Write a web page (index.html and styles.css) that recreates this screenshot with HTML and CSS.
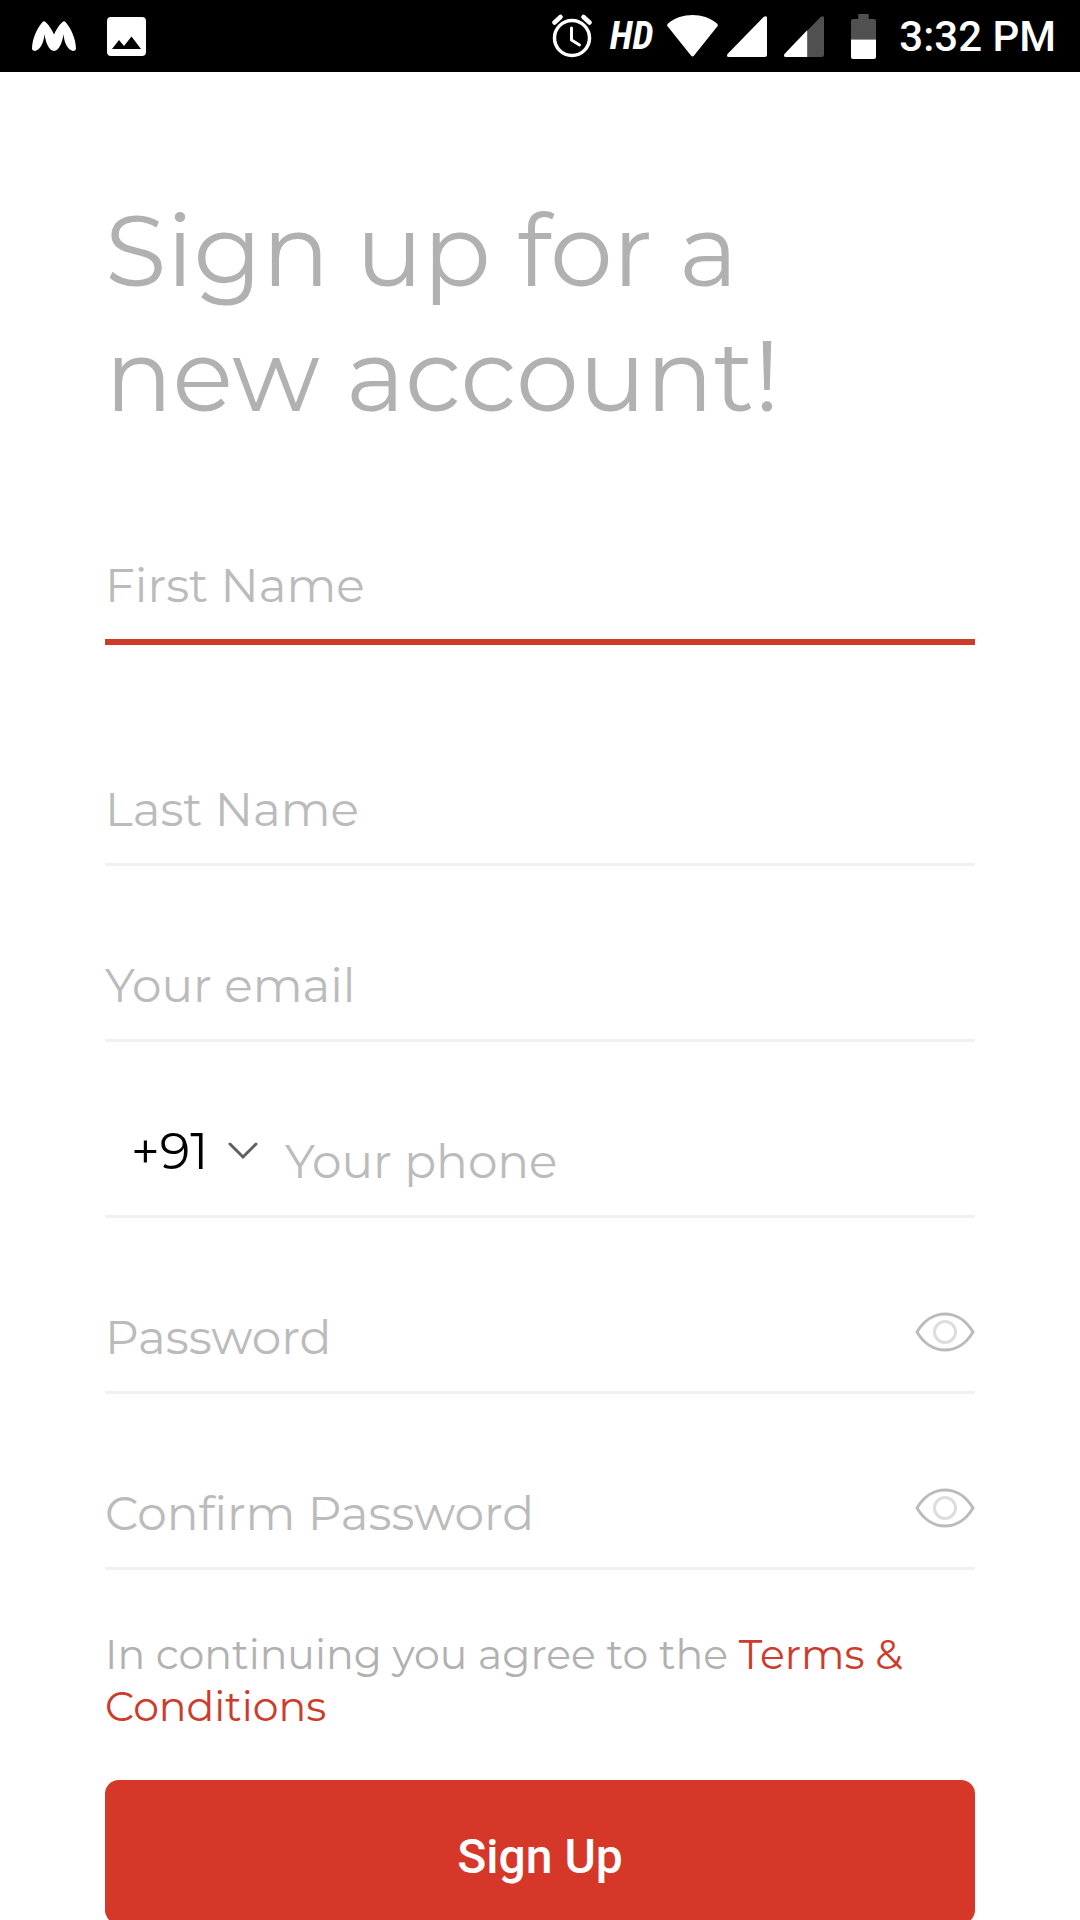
FILE: index.html
```html
<!DOCTYPE html>
<html lang="en">
<head>
<meta charset="utf-8">
<meta name="viewport" content="width=device-width, initial-scale=1">
<title>Sign up</title>
<link rel="stylesheet" href="styles.css">
</head>
<body>
<div class="screen">
  <header class="status-bar">
    <div class="status-group notifications">
      <svg class="icon-m" viewBox="0 0 44 30" aria-hidden="true"><path d="M0 28C0 17 6 6 10.500 1q1.500-1.500 3 0C17 4 20 9 22 13.500C24 9 27 4 30.500 1q1.500-1.500 3 0C38 6 44 17 44 28q-.5 2-3 2C36 29 32 22 31.500 13C30.500 21 27 30 22 30S13.500 21 12.500 13C12 22 8 29 3 30q-2.500 0-3-2z"/></svg>
      <svg class="icon-photo" viewBox="0 0 39 39" aria-hidden="true"><path fill-rule="evenodd" d="M4 0h31a4 4 0 0 1 4 4v31a4 4 0 0 1-4 4H4a4 4 0 0 1-4-4V4a4 4 0 0 1 4-4zm1 32h29L24.500 19.500 17 29l-5-6z"/></svg>
    </div>
    <div class="status-group system">
      <svg class="icon-alarm" viewBox="0 0 40 44" aria-hidden="true"><g fill="none" stroke="#fff" stroke-linecap="round"><circle cx="20" cy="24" r="17.500" stroke-width="3.500"/><path d="M19.500 14v12l8 5" stroke-width="3"/><path d="M2.500 8.500 8.500 3M37.500 8.500 31.500 3" stroke-width="4.500"/></g></svg>
      <span class="hd">HD</span>
      <svg class="icon-wifi" viewBox="0 0 49 42" preserveAspectRatio="none" aria-hidden="true"><path d="M1 8.500C14-2.800 35-2.800 48 8.500q1.500 1.500.3 3L26 40.500q-1.500 1.800-3 0L.7 11.500q-1.200-1.500.3-3z"/></svg>
      <svg class="icon-signal" viewBox="0 0 38 40" preserveAspectRatio="none" aria-hidden="true"><path d="M35 .8Q38-1 38 2v36q0 2-2 2H2q-3 0-1.500-3z"/></svg>
      <svg class="icon-signal weak" viewBox="0 0 38 40" preserveAspectRatio="none" aria-hidden="true"><path fill="#505050" d="M35 .8Q38-1 38 2v36q0 2-2 2H2q-3 0-1.500-3z"/><path d="M22 14v26H2q-3 0-1.500-3z"/></svg>
      <svg class="icon-battery" viewBox="0 0 24 44" preserveAspectRatio="none" aria-hidden="true"><path fill="#505050" d="M7 0h10v5h5q2 0 2 2v18H0V7q0-2 2-2h5z"/><path d="M0 25h24v17q0 2-2 2H2q-2 0-2-2z"/></svg>
      <time class="clock">3:32 PM</time>
    </div>
  </header>

  <main class="content">
    <h1 class="title">Sign up for a<br>new account!</h1>
    <form class="form">
      <div class="field first">
        <input class="input" type="text" placeholder="First Name" aria-label="First Name">
      </div>
      <div class="field">
        <input class="input" type="text" placeholder="Last Name" aria-label="Last Name">
      </div>
      <div class="field">
        <input class="input" type="email" placeholder="Your email" aria-label="Your email">
      </div>
      <div class="field">
        <div class="country">
          <select class="code" aria-label="Country code"><option>+91</option></select>
          <svg class="chevron" viewBox="0 0 30 18" aria-hidden="true"><path d="M2 2l13 13L28 2"/></svg>
        </div>
        <input class="input" type="tel" placeholder="Your phone" aria-label="Your phone">
      </div>
      <div class="field">
        <input class="input" type="password" placeholder="Password" aria-label="Password">
        <button class="reveal" type="button" aria-label="Show password">
          <svg class="eye" viewBox="0 0 60 40" aria-hidden="true"><path d="M2 20C16-4 44-4 58 20 44 44 16 44 2 20z"/><circle cx="30" cy="20" r="10.500"/></svg>
        </button>
      </div>
      <div class="field">
        <input class="input" type="password" placeholder="Confirm Password" aria-label="Confirm Password">
        <button class="reveal" type="button" aria-label="Show confirmed password">
          <svg class="eye" viewBox="0 0 60 40" aria-hidden="true"><path d="M2 20C16-4 44-4 58 20 44 44 16 44 2 20z"/><circle cx="30" cy="20" r="10.500"/></svg>
        </button>
      </div>
      <p class="terms">In continuing you agree to the <a class="terms-link" href="#">Terms &amp; Conditions</a></p>
      <button class="submit" type="submit">Sign Up</button>
    </form>
  </main>
</div>
</body>
</html>
```
FILE: styles.css
```css
* {
  box-sizing: border-box;
}

body {
  margin: 0;
  background: #fff;
  font-family: Montserrat, Inter, sans-serif;
  font-weight: 400;
}

.screen {
  height: 100vh;
  overflow-y: auto;
  scrollbar-width: none;
}

.status-bar {
  display: flex;
  justify-content: space-between;
  align-items: center;
  height: 72px;
  padding: 0 24px 0 32px;
  background: #000;
  color: #fff;
  font-family: Roboto, sans-serif;
}

.status-group {
  display: flex;
  align-items: center;
}

.status-group svg {
  display: block;
  fill: #fff;
}

.notifications {
  gap: 31px;
}

.icon-m {
  width: 44px;
  height: 30px;
}

.icon-photo {
  width: 39px;
  height: 39px;
}

.icon-alarm {
  width: 40px;
  height: 44px;
}

.hd {
  margin: 0 14px 0 18px;
  font-family: "Roboto Condensed", Roboto, sans-serif;
  font-size: 38px;
  font-style: italic;
  font-weight: 700;
}

.icon-wifi {
  width: 51px;
  height: 42px;
}

.icon-signal {
  width: 40px;
  height: 41px;
  margin-left: 9px;
}

.icon-signal.weak {
  margin-left: 17px;
}

.icon-battery {
  width: 25px;
  height: 45px;
  margin: 0 23px 0 27px;
}

.clock {
  font-size: 42px;
  font-weight: 500;
}

.content {
  padding: 116px 105px 64px;
}

.title {
  margin: 0 0 93px;
  color: #b1b1b1;
  font-size: 100px;
  font-weight: 400;
  line-height: 125px;
}

.form {
  display: flex;
  flex-direction: column;
}

.field {
  display: flex;
  align-items: flex-start;
  margin-bottom: 65px;
  border-bottom: 3px solid #f0f0f0;
}

.field.first {
  margin-bottom: 110px;
  border-bottom: 6px solid #cd3c2b;
}

.input {
  flex: 1;
  min-width: 0;
  height: 108px;
  padding: 0;
  border: 0;
  outline: 0;
  background: none;
  color: #000;
  font: inherit;
  font-size: 47px;
}

.input::placeholder {
  color: #bbb;
  opacity: 1;
}

.country {
  display: grid;
  align-items: center;
  width: 180px;
  padding-left: 26px;
}

.code,
.chevron {
  grid-area: 1 / 1;
}

.code {
  height: 88px;
  padding: 0;
  border: 0;
  appearance: none;
  background: none;
  color: #000;
  font: inherit;
  font-size: 50px;
}

.chevron {
  justify-self: end;
  width: 30px;
  height: 18px;
  margin-right: 27px;
  fill: none;
  stroke: #606060;
  stroke-width: 3;
  stroke-linecap: round;
  pointer-events: none;
}

.reveal {
  display: flex;
  align-items: center;
  height: 98px;
  padding: 0;
  border: 0;
  background: none;
}

.eye {
  width: 60px;
  height: 40px;
  fill: none;
  stroke: #bbb;
  stroke-width: 3;
}

.eye circle {
  stroke: #ddd;
}

.terms {
  margin: -7px 0 48px;
  color: #b1b1b1;
  font-size: 41px;
  line-height: 52px;
}

.terms-link {
  color: #cd3c2b;
  text-decoration: none;
}

.submit {
  height: 144px;
  padding: 8px 0 0;
  border: 0;
  border-radius: 14px;
  background: #d53729;
  color: #fff;
  font-family: Roboto, sans-serif;
  font-size: 48px;
  font-weight: 500;
}
```
